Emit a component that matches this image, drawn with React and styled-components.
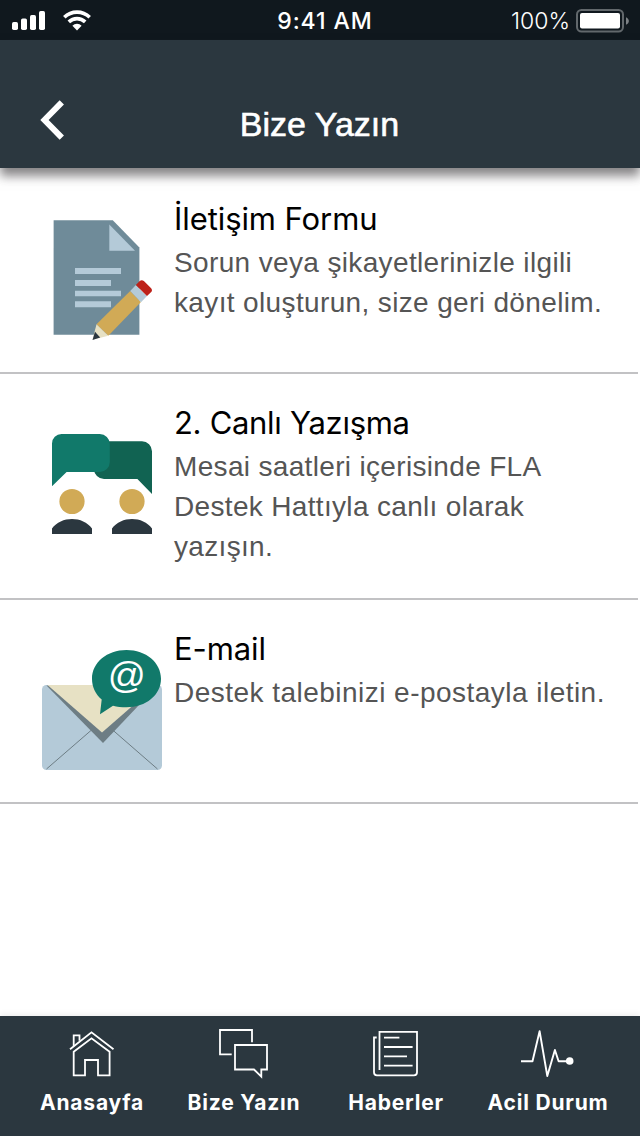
import React from 'react';
import styled, { createGlobalStyle } from 'styled-components';

const GlobalStyle = createGlobalStyle`
  * { box-sizing: border-box; }
  body { margin: 0; background: #fff; }
`;

const Screen = styled.div`
  width: 640px;
  height: 1136px;
  display: flex;
  flex-direction: column;
  overflow: hidden;
  background: #fff;
  font-family: Inter, 'Liberation Sans', sans-serif;
`;

const StatusBar = styled.div`
  height: 40px;
  flex: none;
  display: grid;
  grid-template-columns: 1fr auto 1fr;
  align-items: center;
  padding: 0 11px 0 12px;
  background: #10181e;
  color: #fff;
`;

const StatusGroup = styled.div`
  display: flex;
  align-items: center;
  justify-content: ${(p) => (p.$end ? 'flex-end' : 'flex-start')};
  gap: ${(p) => p.$gap}px;
`;

const Clock = styled.time`
  font-size: 23px;
  font-weight: 500;
  line-height: 40px;
  letter-spacing: 0.95px;
  padding: 1px 0 0 9px;
`;

const Percent = styled.span`
  font-size: 23px;
  font-weight: 300;
  line-height: 40px;
  padding-top: 1px;
`;

const Header = styled.header`
  height: 128px;
  flex: none;
  display: grid;
  grid-template-columns: 104px 1fr 104px;
  align-items: start;
  padding-top: 60px;
  background: #2b373f;
  box-shadow: 0 8px 10px rgba(40, 36, 40, 0.56);
  z-index: 1;
`;

const BackButton = styled.button`
  height: 40px;
  border: 0;
  padding: 0 0 0 40px;
  background: none;
  display: flex;
  align-items: center;
`;

const Title = styled.h1`
  margin: 0;
  padding: 4px 1px 0 0;
  text-align: center;
  font: 400 34px/40px 'Liberation Sans', sans-serif;
  color: #fff;
  -webkit-text-stroke: 0.6px #fff;
`;

const List = styled.main`
  flex: 1;
  padding: 2px 2px 0 0;
`;

const Row = styled.section`
  display: flex;
  gap: 12px;
  padding: 29px 0 0 42px;
  border-bottom: 2px solid #c2c2c4;
`;

const IconBox = styled.div`
  flex: none;
  width: 120px;
  height: 120px;
  margin: 21px 0 32px;
  svg { display: block; overflow: visible; }
`;

const RowText = styled.div`
  flex: 1;
  padding-bottom: 31px;
`;

const RowTitle = styled.h2`
  margin: 0 0 4px;
  font-size: 31px;
  font-weight: 400;
  line-height: 40px;
  letter-spacing: ${(p) => p.$tracking}px;
  color: #000;
`;

const Description = styled.p`
  margin: 0;
  font: 400 28px/40px 'Liberation Sans', sans-serif;
  letter-spacing: ${(p) => p.$tracking}px;
  color: #555;
  white-space: pre-line;
`;

const TabBar = styled.nav`
  height: 120px;
  flex: none;
  display: grid;
  grid-template-columns: repeat(4, 152px);
  padding: 10px 16px 0;
  background: #2b373f;
  box-shadow: 0 -2px 6px rgba(0, 0, 0, 0.07);
`;

const Tab = styled.button`
  border: 0;
  padding: 0;
  background: none;
  color: #fff;
  display: flex;
  flex-direction: column;
  align-items: center;
  font: 700 21px/28px Inter, sans-serif;
  letter-spacing: 0.8px;
  white-space: nowrap;
  svg { display: block; flex: none; overflow: visible; margin-bottom: 13px; }
`;

const Signal = () => (
  <svg width="34" height="22" viewBox="0 0 34 22" fill="#fff">
    <rect x="0" y="12" width="6" height="8" rx="1.7" />
    <rect x="9" y="8.5" width="6" height="11.5" rx="1.7" />
    <rect x="18" y="5" width="6" height="15" rx="1.7" />
    <rect x="27" y="1" width="6" height="19" rx="1.7" />
  </svg>
);

const Wifi = () => (
  <svg width="28" height="22" viewBox="0 0 28 22">
    <g fill="none" stroke="#fff" strokeWidth="3.6">
      <path d="M1.3 7.2a18.4 18.4 0 0 1 25.4 0" />
      <path d="M5.8 11.9a11.8 11.8 0 0 1 16.4 0" />
    </g>
    <path d="M9.4 15.7a6.7 6.7 0 0 1 9.2 0L14 20.5Z" fill="#fff" />
  </svg>
);

const Battery = () => (
  <svg width="53" height="24" viewBox="0 0 53 24">
    <rect x="1" y="1" width="46" height="21.5" rx="4.5" fill="none" stroke="#62686c" strokeWidth="2" />
    <rect x="4" y="4" width="40" height="15.5" rx="2" fill="#fff" />
    <path d="M50 8.2c3.8 1.6 3.8 6 0 7.6Z" fill="#7c8185" />
  </svg>
);

const BackIcon = () => (
  <svg width="24" height="40" viewBox="0 0 24 40">
    <path d="M21.8 2.3 4.5 20l17.3 17.7" fill="none" stroke="#fff" strokeWidth="6" />
  </svg>
);

const FormIcon = () => (
  <svg width="120" height="120" viewBox="0 0 120 120">
    <path d="M11.6 .3h59.2L97.4 27.5v87.3H11.6Z" fill="#6f8b99" />
    <path d="M67.3 4.4v26.3H93Z" fill="#b4cad8" />
    <path d="M33 48h46v6H33zM33 60h36v6H33zM33 70.7h46v5.6H33zM33 81.3h36v6H33z" fill="#b4cad8" />
    <path d="m54.5 104.3 33.7-33.4L99 82 66.3 115.8Z" fill="#d1aa56" />
    <path d="m88.2 70.9 5.7-6L105 76l-6 6.3Z" fill="#b4cad8" />
    <path d="m93.9 64.9 3.8-3.8q1.8-1.8 4.2-.2l7 7q2 2.2 .3 4.2L105 76Z" fill="#bd2119" />
    <path d="m54.5 104.3 11.8 11.5L50.5 119.8Z" fill="#e7e1c4" />
    <path d="m53 111.8 5.2 5.8-7.7 2.3Z" fill="#2b373f" />
  </svg>
);

const ChatIcon = () => (
  <svg width="120" height="120" viewBox="0 0 120 120">
    <path d="M64 17.3h36a10 10 0 0 1 10 10V70L95.4 55H62a10 10 0 0 1-10-10Z" fill="#116352" />
    <path d="M19.5 10h38.3a10 10 0 0 1 10 10v18a10 10 0 0 1-10 10H24.6L10 62.2V19.5a9.5 9.5 0 0 1 9.5-9.5Z" fill="#11796a" />
    <g fill="#d1aa56">
      <circle cx="30" cy="77.5" r="12.6" />
      <circle cx="90" cy="77.5" r="12.6" />
    </g>
    <path d="M10 110v-5.5c9-12.8 31-12.8 40 0v5.5ZM70 110v-5.5c9-12.8 31-12.8 40 0v5.5Z" fill="#2b373f" />
  </svg>
);

const MailIcon = () => (
  <svg width="120" height="120" viewBox="0 0 120 120">
    <rect x="0" y="35" width="120" height="85" rx="4.5" fill="#b4cad8" />
    <path d="m4.5 119 45-39M115.5 119 71 80.3" stroke="#6d7d84" strokeWidth="1" />
    <path d="M4.5 35.5 61 93 116 35Z" fill="#6d7d84" />
    <path d="M5.5 35h109L60 82.6Z" fill="#e7e1c4" />
    <path d="M84.5 0C104 0 119 12.5 119 28.8S104 57.3 84.5 57.3c-5 0-9.5-.7-13.5-1.6L58 64.2l1.7-14.8C53.5 44.5 50 37 50 28.8 50 12.5 65 0 84.5 0Z" fill="#11796a" />
    <text x="84.8" y="38" textAnchor="middle" fill="#fff" fontFamily="Liberation Sans, sans-serif" fontSize="37.5">@</text>
  </svg>
);

const HouseIcon = () => (
  <svg width="50" height="50" viewBox="0 0 50 50" fill="none" stroke="#fff" strokeWidth="1.8">
    <path d="M3 23.3 24.5 6.3l22 17" />
    <path d="M6.7 20V9.4h5.8v5.3" />
    <path d="M6.7 25.8v23.5H18V34h13v15.3h11.6V25.8L24.5 12.3Z" />
  </svg>
);

const ChatsIcon = () => (
  <svg width="50" height="50" viewBox="0 0 50 50" fill="none" stroke="#fff" strokeWidth="1.8">
    <path d="M12.7 28.4H1V4h32v12.3" />
    <path d="M16 19h32v24.5h-5.7v7.2L35 43.5H16Z" />
  </svg>
);

const NewsIcon = () => (
  <svg width="50" height="50" viewBox="0 0 50 50" fill="none" stroke="#fff" strokeWidth="1.8">
    <path d="M8.5 44V5.8H46v40.5q0 3-3 3H5.9q-2.9 0-2.9-3V11.5h2.7" />
    <path d="M13 11.6h15.4M13 21h28.6M13 30.3h23M13 39.6h28.6" />
  </svg>
);

const PulseIcon = () => (
  <svg width="54" height="50" viewBox="0 0 54 50" fill="none" stroke="#fff" strokeWidth="1.9" strokeLinejoin="round">
    <path d="M0 35.2h11.5l7.1-30 7.7 44.8L33.9 24l3.7 11.2h11" />
    <circle cx="48.7" cy="35" r="3.8" fill="#fff" stroke="none" />
  </svg>
);

const channels = [
  { title: 'İletişim Formu', tracking: -0.08, textTracking: 0.36, icon: FormIcon, text: 'Sorun veya şikayetlerinizle ilgili\nkayıt oluşturun, size geri dönelim.' },
  { title: '2. Canlı Yazışma', tracking: -0.3, textTracking: 0.33, icon: ChatIcon, text: 'Mesai saatleri içerisinde FLA\nDestek Hattıyla canlı olarak\nyazışın.' },
  { title: 'E-mail', tracking: -0.1, textTracking: 0.47, icon: MailIcon, text: 'Destek talebinizi e-postayla iletin.' },
];

const tabs = [
  { label: 'Anasayfa', icon: HouseIcon },
  { label: 'Bize Yazın', icon: ChatsIcon },
  { label: 'Haberler', icon: NewsIcon },
  { label: 'Acil Durum', icon: PulseIcon },
];

export default function App() {
  return (
    <Screen>
      <GlobalStyle />
      <StatusBar>
        <StatusGroup $gap={17}>
          <Signal />
          <Wifi />
        </StatusGroup>
        <Clock>9:41 AM</Clock>
        <StatusGroup $end $gap={6}>
          <Percent>100%</Percent>
          <Battery />
        </StatusGroup>
      </StatusBar>
      <Header>
        <BackButton aria-label="Geri"><BackIcon /></BackButton>
        <Title>Bize Yazın</Title>
      </Header>
      <List>
        {channels.map(({ title, tracking, textTracking, icon: Icon, text }) => (
          <Row key={title}>
            <IconBox><Icon /></IconBox>
            <RowText>
              <RowTitle $tracking={tracking}>{title}</RowTitle>
              <Description $tracking={textTracking}>{text}</Description>
            </RowText>
          </Row>
        ))}
      </List>
      <TabBar>
        {tabs.map(({ label, icon: Icon }) => (
          <Tab key={label}>
            <Icon />
            {label}
          </Tab>
        ))}
      </TabBar>
    </Screen>
  );
}
